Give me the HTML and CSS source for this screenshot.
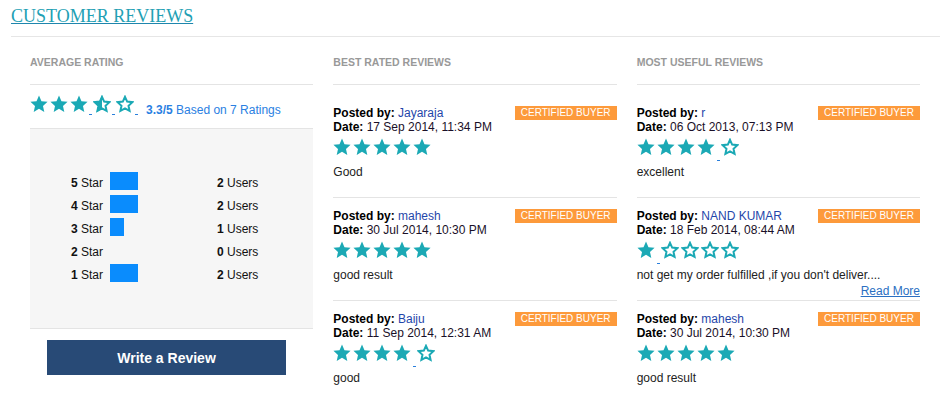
FILE: index.html
```html
<!DOCTYPE html>
<html>
<head>
<meta charset="utf-8">
<title>Customer Reviews</title>
<link rel="stylesheet" href="styles.css">
</head>
<body>
<svg class="defs" width="0" height="0" aria-hidden="true">
  <defs>
    <symbol id="sf" viewBox="0 0 18 18">
      <polygon points="9,0.6 11.47,6.2 17.56,6.82 12.99,10.9 14.29,16.88 9,13.8 3.71,16.88 5.01,10.9 0.44,6.82 6.53,6.2" fill="#1ba9b5"/>
    </symbol>
    <symbol id="se" viewBox="0 0 18 18">
      <polygon points="9,1.8 11.17,6.61 16.42,7.19 12.52,10.74 13.58,15.91 9,13.3 4.42,15.91 5.48,10.74 1.58,7.19 6.83,6.61" fill="none" stroke="#1ba9b5" stroke-width="2" stroke-linejoin="miter"/>
    </symbol>
    <symbol id="sh" viewBox="0 0 18 18">
      <polygon points="9,1.8 11.17,6.61 16.42,7.19 12.52,10.74 13.58,15.91 9,13.3 4.42,15.91 5.48,10.74 1.58,7.19 6.83,6.61" fill="none" stroke="#1ba9b5" stroke-width="2" stroke-linejoin="miter"/>
      <polygon points="9,0.6 9,13.8 3.71,16.88 5.01,10.9 0.44,6.82 6.53,6.2" fill="#1ba9b5"/>
    </symbol>
  </defs>
</svg>

<header class="page-head">
  <h1 class="page-title">CUSTOMER REVIEWS</h1>
</header>

<main class="cols">
  <section class="col">
    <h2 class="col-head">AVERAGE RATING</h2>
    <div class="avg">
      <div class="stars stars-avg">
        <svg><use href="#sf"/></svg><svg><use href="#sf"/></svg><svg><use href="#sf"/></svg><span class="lnk"></span><svg><use href="#sh"/></svg><span class="lnk"></span><svg><use href="#se"/></svg><span class="lnk"></span>
      </div>
      <span class="avg-text"><b>3.3/5</b> Based on 7 Ratings</span>
    </div>
    <div class="dist">
      <span class="lbl"><b>5</b> Star</span><span class="barcell"><span class="bar" style="width:28px"></span></span><span class="cnt"><b>2</b> Users</span>
      <span class="lbl"><b>4</b> Star</span><span class="barcell"><span class="bar" style="width:28px"></span></span><span class="cnt"><b>2</b> Users</span>
      <span class="lbl"><b>3</b> Star</span><span class="barcell"><span class="bar" style="width:14px"></span></span><span class="cnt"><b>1</b> Users</span>
      <span class="lbl"><b>2</b> Star</span><span class="barcell"><span class="bar" style="width:0px"></span></span><span class="cnt"><b>0</b> Users</span>
      <span class="lbl"><b>1</b> Star</span><span class="barcell"><span class="bar" style="width:28px"></span></span><span class="cnt"><b>2</b> Users</span>
    </div>
    <button class="write" type="button">Write a Review</button>
  </section>

  <section class="col">
    <h2 class="col-head">BEST RATED REVIEWS</h2>
    <article class="card">
      <div class="line"><span><b>Posted by:</b> <a class="name">Jayaraja</a></span><span class="badge">CERTIFIED BUYER</span></div>
      <div class="date"><b>Date:</b> 17 Sep 2014, 11:34 PM</div>
      <div class="stars"><svg><use href="#sf"/></svg><svg><use href="#sf"/></svg><svg><use href="#sf"/></svg><svg><use href="#sf"/></svg><svg><use href="#sf"/></svg></div>
      <p class="text">Good</p>
    </article>
    <article class="card">
      <div class="line"><span><b>Posted by:</b> <a class="name">mahesh</a></span><span class="badge">CERTIFIED BUYER</span></div>
      <div class="date"><b>Date:</b> 30 Jul 2014, 10:30 PM</div>
      <div class="stars"><svg><use href="#sf"/></svg><svg><use href="#sf"/></svg><svg><use href="#sf"/></svg><svg><use href="#sf"/></svg><svg><use href="#sf"/></svg></div>
      <p class="text">good result</p>
    </article>
    <article class="card last">
      <div class="line"><span><b>Posted by:</b> <a class="name">Baiju</a></span><span class="badge">CERTIFIED BUYER</span></div>
      <div class="date"><b>Date:</b> 11 Sep 2014, 12:31 AM</div>
      <div class="stars"><svg><use href="#sf"/></svg><svg><use href="#sf"/></svg><svg><use href="#sf"/></svg><svg><use href="#sf"/></svg><span class="lnk"></span><svg><use href="#se"/></svg></div>
      <p class="text">good</p>
    </article>
  </section>

  <section class="col">
    <h2 class="col-head">MOST USEFUL REVIEWS</h2>
    <article class="card">
      <div class="line"><span><b>Posted by:</b> <a class="name">r</a></span><span class="badge">CERTIFIED BUYER</span></div>
      <div class="date"><b>Date:</b> 06 Oct 2013, 07:13 PM</div>
      <div class="stars"><svg><use href="#sf"/></svg><svg><use href="#sf"/></svg><svg><use href="#sf"/></svg><svg><use href="#sf"/></svg><span class="lnk"></span><svg><use href="#se"/></svg></div>
      <p class="text">excellent</p>
    </article>
    <article class="card">
      <div class="line"><span><b>Posted by:</b> <a class="name">NAND KUMAR</a></span><span class="badge">CERTIFIED BUYER</span></div>
      <div class="date"><b>Date:</b> 18 Feb 2014, 08:44 AM</div>
      <div class="stars"><svg><use href="#sf"/></svg><span class="lnk"></span><svg><use href="#se"/></svg><svg><use href="#se"/></svg><svg><use href="#se"/></svg><svg><use href="#se"/></svg></div>
      <p class="text">not get my order fulfilled ,if you don't deliver....</p>
      <div class="more"><a class="more-link">Read More</a></div>
    </article>
    <article class="card last">
      <div class="line"><span><b>Posted by:</b> <a class="name">mahesh</a></span><span class="badge">CERTIFIED BUYER</span></div>
      <div class="date"><b>Date:</b> 30 Jul 2014, 10:30 PM</div>
      <div class="stars"><svg><use href="#sf"/></svg><svg><use href="#sf"/></svg><svg><use href="#sf"/></svg><svg><use href="#sf"/></svg><svg><use href="#sf"/></svg></div>
      <p class="text">good result</p>
    </article>
  </section>
</main>
</body>
</html>
```

FILE: styles.css
```css
* { box-sizing: border-box; }

html, body {
  margin: 0;
  padding: 0;
  background: #ffffff;
}

body {
  font-family: "Liberation Sans", Arial, sans-serif;
  font-size: 12px;
  color: #222222;
}

.defs {
  display: block;
  width: 0;
  height: 0;
  overflow: hidden;
}

.page-head {
  margin-left: 11px;
  padding: 5px 0 9px 0;
  border-bottom: 1px solid #e6e6e6;
}

.page-title {
  margin: 0;
  font-family: "Liberation Serif", "Times New Roman", serif;
  font-weight: normal;
  font-size: 18px;
  line-height: 22px;
  color: #22a0b4;
  text-decoration: underline;
  text-decoration-color: #1f86ad;
}

.cols {
  display: grid;
  grid-template-columns: repeat(3, 1fr);
  column-gap: 20px;
  margin-top: 18px;
  padding: 0 20px 0 30px;
}

.col {
  min-width: 0;
}

.col-head {
  margin: 0;
  padding-bottom: 15px;
  border-bottom: 1px solid #e4e4e4;
  font-size: 10.5px;
  line-height: 14px;
  font-weight: bold;
  color: #999999;
}

/* stars */
.stars {
  display: flex;
  align-items: flex-start;
  height: 18px;
}

.stars svg {
  flex: none;
  width: 18px;
  height: 18px;
  margin-right: 2px;
}

.lnk {
  flex: none;
  width: 3px;
  height: 1px;
  margin-top: 22px;
  margin-right: 1px;
  background: #2a7fdc;
}

.stars-avg .lnk {
  margin-top: 19px;
  margin-left: -1px;
}

/* average rating */
.avg {
  display: flex;
  align-items: flex-start;
  padding: 10px 0 11px 0;
  border-bottom: 1px solid #e4e4e4;
}

.avg-text {
  margin-top: 8px;
  margin-left: 7px;
  line-height: 14px;
  color: #2a80e2;
}

.dist {
  display: grid;
  grid-template-columns: 39px 107px auto;
  row-gap: 5px;
  padding: 43px 0 46px 41px;
  background: #f6f6f6;
  border-bottom: 1px solid #e4e4e4;
  color: #111111;
}

.lbl,
.cnt {
  padding-top: 4px;
  line-height: 14px;
}

.barcell {
  display: flex;
  align-items: center;
}

.bar {
  display: block;
  height: 18px;
  background: #0a8cfd;
}

.write {
  display: flex;
  align-items: center;
  justify-content: center;
  width: 239px;
  height: 35px;
  margin: 11px 0 0 17px;
  padding: 0;
  border: none;
  background: #284a76;
  color: #ffffff;
  font-family: "Liberation Sans", Arial, sans-serif;
  font-size: 14px;
  font-weight: bold;
}

/* review cards */
.card {
  height: 103px;
  padding-top: 11px;
  border-bottom: 1px solid #e4e4e4;
}

.col-head + .card {
  margin-top: 10px;
}

.card.last {
  border-bottom: none;
}

.line {
  display: flex;
  justify-content: space-between;
  line-height: 14px;
  color: #1a1028;
}

.date {
  line-height: 14px;
  color: #1a1028;
}

.line b,
.date b {
  color: #000000;
}

.name {
  color: #1f46aa;
}

.badge {
  display: block;
  width: 102px;
  height: 14px;
  line-height: 14px;
  text-align: center;
  background: #fd9a3b;
  color: #ffffff;
  font-size: 10px;
}

.card .stars {
  margin-top: 4px;
}

.text {
  margin: 9px 0 0 0;
  line-height: 14px;
  color: #222222;
}

.more {
  margin-top: 2px;
  text-align: right;
  line-height: 14px;
}

.more-link {
  color: #2b6fc2;
  text-decoration: underline;
}
```
